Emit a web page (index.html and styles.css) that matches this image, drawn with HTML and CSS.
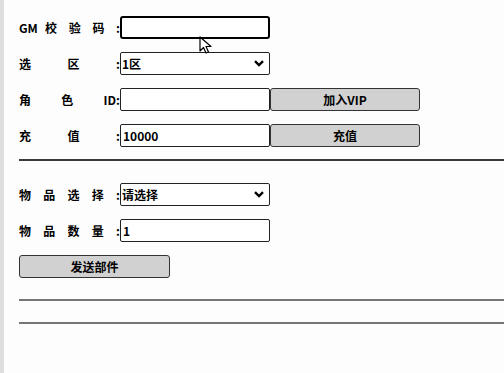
FILE: index.html
```html
<!DOCTYPE html>
<html lang="zh-CN">

<head>
    <meta charset="UTF-8">
    <meta name="viewport" content="width=device-width, initial-scale=1.0">
    <title>GM</title>
    <link rel="stylesheet" href="styles.css">
</head>

<body>
    <div class="page">
        <div class="row">
            <label class="label" for="code">GM 校 验 码 :</label>
            <input type="text" id="code" class="field focus">
        </div>
        <div class="row">
            <label class="label" for="zone">选 区 :</label>
            <div class="pick">
                <select id="zone" class="field">
                    <option>1区</option>
                </select>
                <svg class="arrow" width="10" height="7" viewBox="0 0 10 7"><path d="M1 1.2 L5 5 L9 1.2" fill="none" stroke="#000" stroke-width="2.4"/></svg>
            </div>
        </div>
        <div class="row">
            <label class="label" for="roleid">角 色 ID:</label>
            <input type="text" id="roleid" class="field">
            <button class="btn">加入VIP</button>
        </div>
        <div class="row last">
            <label class="label" for="money">充 值 :</label>
            <input type="text" id="money" class="field" value="10000">
            <button class="btn">充值</button>
        </div>
        <hr class="line dark">
        <div class="row">
            <label class="label" for="item">物 品 选 择 :</label>
            <div class="pick">
                <select id="item" class="field">
                    <option>请选择</option>
                </select>
                <svg class="arrow" width="10" height="7" viewBox="0 0 10 7"><path d="M1 1.2 L5 5 L9 1.2" fill="none" stroke="#000" stroke-width="2.4"/></svg>
            </div>
        </div>
        <div class="row">
            <label class="label" for="count">物 品 数 量 :</label>
            <input type="text" id="count" class="field" value="1">
        </div>
        <button class="btn send">发送部件</button>
        <hr class="line">
        <hr class="line">

        <svg class="cursor" width="14" height="20" viewBox="0 0 14 20"><path d="M1 1 L1 15 L4.5 11.5 L7 17 L9.5 16 L7 10.5 L12 10.5 Z" fill="#fff" stroke="#000" stroke-width="1.2" stroke-linejoin="round"/></svg>
    </div>
</body>

</html>
```

FILE: styles.css
```css
body {
    margin: 0;
    background-color: #fdfdfd;
    font-family: "Noto Sans CJK SC", "Liberation Sans", sans-serif;
    font-size: 12px;
    font-weight: bold;
    color: #000;
}

.page {
    position: relative;
    min-height: 373px;
    box-sizing: border-box;
    border-left: 4px solid #dedede;
    padding: 16px 0 0 15px;
}

.row {
    display: flex;
    align-items: center;
    height: 23px;
    margin-bottom: 13px;
}

.row.last {
    margin-bottom: 12px;
}

.label {
    width: 101px;
    text-align: justify;
    text-align-last: justify;
    line-height: 23px;
}

.field {
    width: 150px;
    height: 23px;
    box-sizing: border-box;
    border: 1px solid #222;
    border-radius: 2px;
    background-color: #fff;
    padding: 0 2px;
    font-family: "Noto Sans CJK SC", "Liberation Sans", sans-serif;
    font-size: 12px;
    font-weight: bold;
    color: #000;
    outline: none;
}

.field.focus {
    border: 2px solid #000;
    border-radius: 3px;
}

.pick {
    position: relative;
    width: 150px;
    height: 23px;
}

.pick select {
    appearance: none;
    -webkit-appearance: none;
    display: block;
    padding: 0 1px;
}

.arrow {
    position: absolute;
    right: 6px;
    top: 8px;
}

.btn {
    width: 150px;
    height: 23px;
    box-sizing: border-box;
    border: 1px solid #333;
    border-radius: 3px;
    background-color: #d1d1d1;
    padding: 0;
    font-family: "Noto Sans CJK SC", "Liberation Sans", sans-serif;
    font-size: 12px;
    font-weight: bold;
    color: #000;
}

.send {
    display: block;
    width: 151px;
}

.line {
    margin: 21px 0 0 0;
    border: none;
    border-top: 2px solid #767676;
    height: 0;
}

.line.dark {
    margin: 0 0 22px 0;
    border-top-color: #3a3a3a;
}

.cursor {
    position: absolute;
    left: 195px;
    top: 36px;
}
```
